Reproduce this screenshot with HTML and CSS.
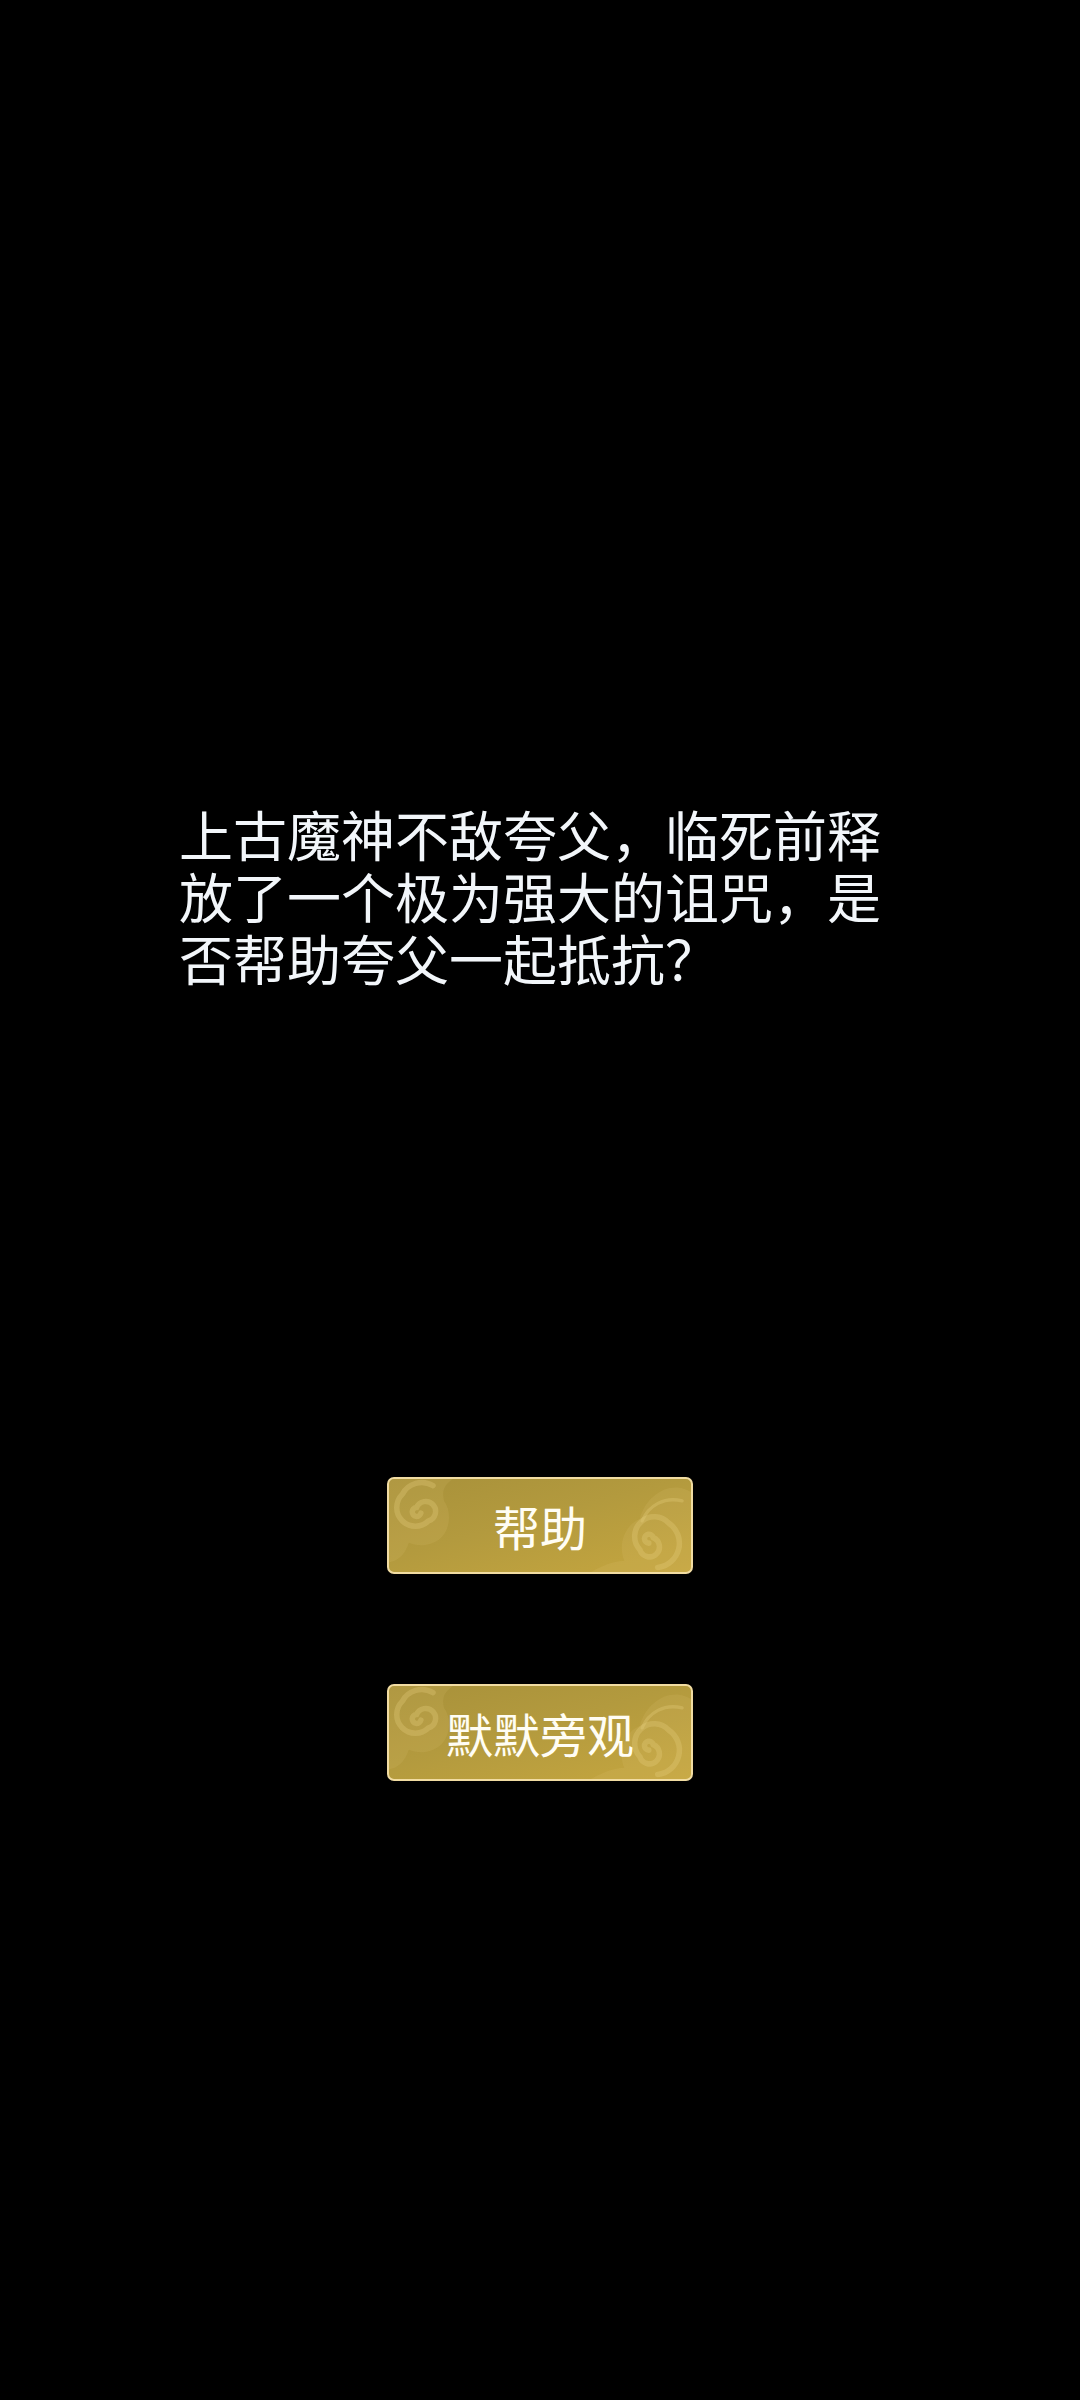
FILE: index.html
```html
<!DOCTYPE html>
<html lang="zh-CN">
<head>
  <meta charset="UTF-8">
  <meta name="viewport" content="width=device-width, initial-scale=1.0">
  <title>夸父</title>
  <link rel="stylesheet" href="styles.css">
</head>
<body>
  <div class="story">
    <p class="question">上古魔神不敌夸父，临死前释放了一个极为强大的诅咒，是否帮助夸父一起抵抗？</p>
  </div>

  <div class="choices">
    <button class="choice">
      <svg class="cloud cloud-left" viewBox="0 0 80 80" width="88" height="88">
        <path class="cloud-fill" d="M0 0 H58 C50 6 48 10 50 20 C58 30 56 52 40 58 C30 62 24 60 18 58 C14 70 8 74 0 76 Z"/>
        <path class="cloud-line" d="M29 31 A4 4 0 1 1 25 26 A9 9 0 1 1 36 38 A15 15 0 1 1 12 14 A20 20 0 0 1 40 6"/>
      </svg>
      <svg class="cloud cloud-right" viewBox="0 0 90 90" width="100" height="100">
        <path class="cloud-fill" d="M90 90 H0 C14 82 22 80 30 80 C24 66 30 48 44 42 C48 26 62 14 76 14 C82 14 86 16 90 18 Z"/>
        <path class="cloud-line" d="M52 64 A4 4 0 1 1 56 59 A9 9 0 1 1 44 70 A15 15 0 1 1 70 46 A22 22 0 0 1 60 86"/>
        <path class="cloud-line thin" d="M46 44 C52 30 66 22 82 26"/>
      </svg>
      <span>帮助</span>
    </button>
    <button class="choice">
      <svg class="cloud cloud-left" viewBox="0 0 80 80" width="88" height="88">
        <path class="cloud-fill" d="M0 0 H58 C50 6 48 10 50 20 C58 30 56 52 40 58 C30 62 24 60 18 58 C14 70 8 74 0 76 Z"/>
        <path class="cloud-line" d="M29 31 A4 4 0 1 1 25 26 A9 9 0 1 1 36 38 A15 15 0 1 1 12 14 A20 20 0 0 1 40 6"/>
      </svg>
      <svg class="cloud cloud-right" viewBox="0 0 90 90" width="100" height="100">
        <path class="cloud-fill" d="M90 90 H0 C14 82 22 80 30 80 C24 66 30 48 44 42 C48 26 62 14 76 14 C82 14 86 16 90 18 Z"/>
        <path class="cloud-line" d="M52 64 A4 4 0 1 1 56 59 A9 9 0 1 1 44 70 A15 15 0 1 1 70 46 A22 22 0 0 1 60 86"/>
        <path class="cloud-line thin" d="M46 44 C52 30 66 22 82 26"/>
      </svg>
      <span>默默旁观</span>
    </button>
  </div>
</body>
</html>
```

FILE: styles.css
```css
html, body {
  margin: 0;
  background: #000;
}
body {
  width: 1080px;
  height: 2400px;
  font-family: "Noto Sans CJK SC", "Noto Sans", sans-serif;
  color: #f2f6fa;
}
.story {
  padding: 803px 0 0 179px;
}
.question {
  margin: 0;
  width: 712px;
  font-size: 54px;
  line-height: 62px;
  font-weight: 400;
}
.choices {
  display: flex;
  flex-direction: column;
  align-items: center;
  gap: 110px;
  margin-top: 488px;
}
.choice {
  position: relative;
  overflow: hidden;
  width: 306px;
  height: 97px;
  padding: 0;
  border: 2px solid #f1dca2;
  border-radius: 7px;
  background: linear-gradient(165deg, #a8913a 0%, #b39a3e 45%, #c5a63f 100%);
  color: #fffdf4;
  font-family: "Noto Sans CJK SC", sans-serif;
  font-size: 47px;
  line-height: 1;
  cursor: pointer;
}
.choice span {
  position: relative;
}
.cloud {
  position: absolute;
}
.cloud-left {
  left: 0;
  top: 0;
}
.cloud-right {
  right: 0;
  bottom: 0;
}
.cloud-fill {
  fill: rgba(225, 200, 120, 0.14);
}
.cloud-line {
  fill: none;
  stroke: rgba(232, 210, 130, 0.3);
  stroke-width: 5;
  stroke-linecap: round;
}
.cloud-line.thin {
  stroke-width: 3;
}
```
